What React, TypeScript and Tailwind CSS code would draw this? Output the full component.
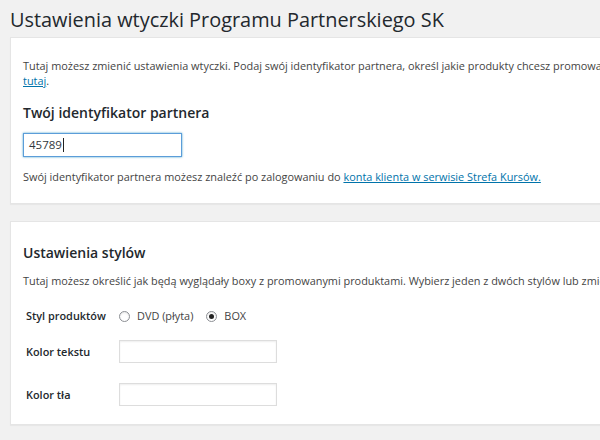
import React from "react";

// WP-admin style settings page for the partner plugin.

function Radio({ checked }: { checked?: boolean }) {
  return (
    <span className="flex h-[11px] w-[11px] items-center justify-center rounded-full border border-[#8c8f94] bg-white shadow-[inset_0_1px_2px_rgba(0,0,0,0.1)]">
      {checked && <span className="h-[5px] w-[5px] rounded-full bg-[#222]" />}
    </span>
  );
}

function ColorInput() {
  return (
    <div className="h-[23px] w-[158px] border border-[#ddd] bg-white shadow-[inset_0_1px_2px_rgba(0,0,0,0.07)]" />
  );
}

export default function App() {
  return (
    <div className="h-[440px] w-[600px] overflow-hidden bg-[#f1f1f1] font-['Open_Sans',sans-serif] text-[10.9px] text-[#444]">
      <div className="w-[860px] pl-[10px]">
        <h1 className="pt-[6px] text-[19.9px] leading-[27px] font-normal text-[#23282d]">
          Ustawienia wtyczki Programu Partnerskiego SK
        </h1>

        <section className="mt-[4px] border border-[#e5e5e5] bg-white px-[12px] pt-[20px] pb-[19px] shadow-[0_1px_1px_rgba(0,0,0,0.04)]">
          <p className="leading-[15px]">
            Tutaj możesz zmienić ustawienia wtyczki. Podaj swój identyfikator partnera, określ jakie produkty chcesz promować
            oraz wygląd boxów.
            <br />
            <a className="text-[#0073aa] underline">tutaj</a>.
          </p>
          <h2 className="mt-[15px] text-[14px] leading-[20px] font-semibold text-[#23282d]">
            Twój identyfikator partnera
          </h2>
          <div className="mt-[10px] flex h-[24px] w-[159px] items-center border border-[#5b9dd9] bg-white pl-[5px] text-[11.5px] text-[#32373c] shadow-[0_0_2px_rgba(30,140,190,0.8)]">
            45789
            <span className="ml-[1px] h-[14px] w-px bg-[#222]" />
          </div>
          <p className="mt-[12px] leading-[15px]">
            Swój identyfikator partnera możesz znaleźć po zalogowaniu do{" "}
            <a className="text-[#0073aa] underline">konta klienta w serwisie Strefa Kursów.</a>
          </p>
        </section>

        <section className="mt-[17px] border border-[#e5e5e5] bg-white px-[12px] pt-[21px] pb-[18px] shadow-[0_1px_1px_rgba(0,0,0,0.04)]">
          <h2 className="text-[14px] leading-[20px] font-semibold text-[#23282d]">Ustawienia stylów</h2>
          <p className="mt-[10px] leading-[15px]">
            Tutaj możesz określić jak będą wyglądały boxy z promowanymi produktami. Wybierz jeden z dwóch stylów lub zmień
            kolory ręcznie.
          </p>

          <div className="mt-[20px] flex flex-col pl-[3px]">
            <div className="flex items-center">
              <span className="w-[93px] font-semibold text-[#23282d]">Styl produktów</span>
              <Radio />
              <span className="ml-[7px]">DVD (płyta)</span>
              <span className="ml-[13px]">
                <Radio checked />
              </span>
              <span className="ml-[7px]">BOX</span>
            </div>

            <div className="mt-[16px] flex items-center">
              <span className="w-[93px] font-semibold text-[#23282d]">Kolor tekstu</span>
              <ColorInput />
            </div>

            <div className="mt-[20px] flex items-center">
              <span className="w-[93px] font-semibold text-[#23282d]">Kolor tła</span>
              <ColorInput />
            </div>
          </div>
        </section>
      </div>
    </div>
  );
}
